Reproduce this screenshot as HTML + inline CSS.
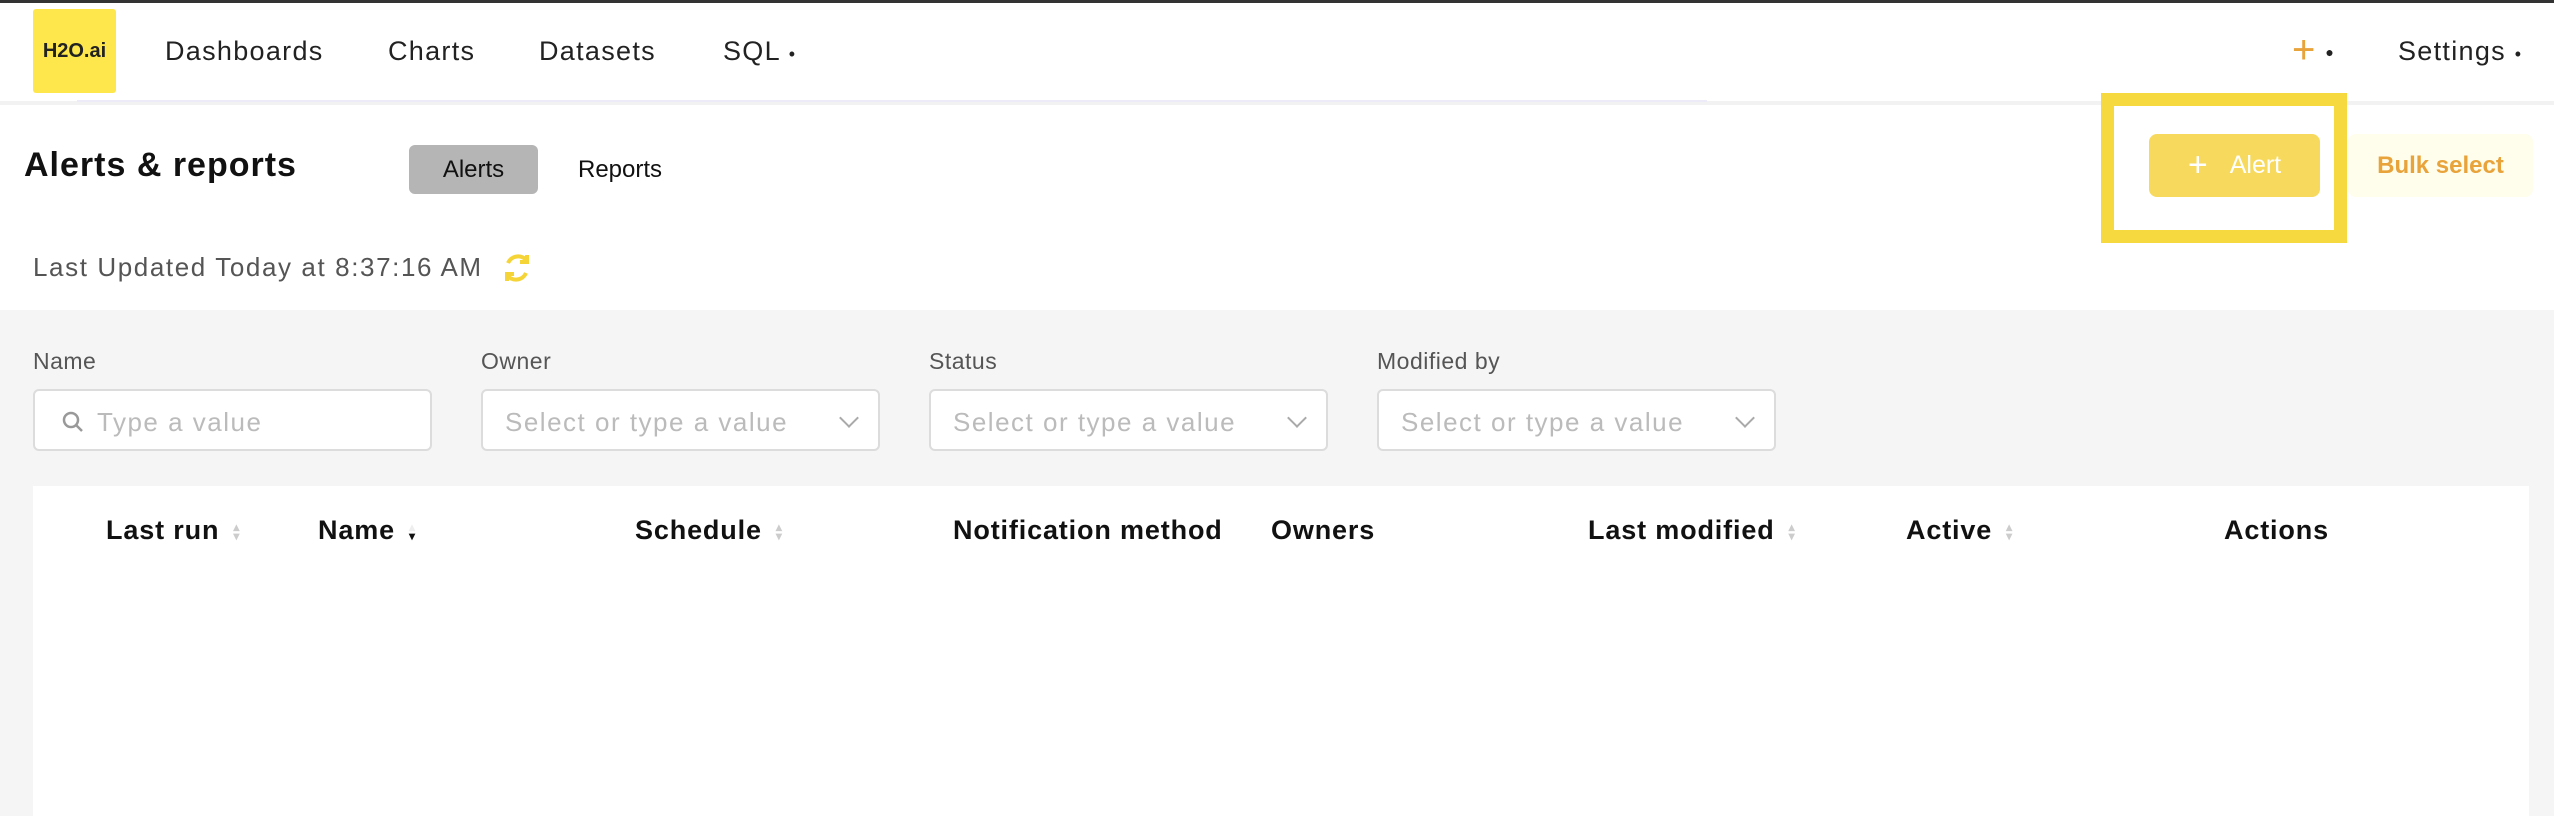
<!DOCTYPE html>
<html><head><style>
*{margin:0;padding:0;box-sizing:border-box}
body{width:2554px;height:816px;overflow:hidden;background:#fff;font-family:"Liberation Sans",sans-serif;position:relative;color:#111}
.a{position:absolute;white-space:nowrap}
.nav{font-size:27px;top:36px;color:#222;letter-spacing:1.3px}
.lbl{font-size:23px;color:#555;top:348px;letter-spacing:0.5px}
.inp{top:389px;height:62px;width:399px;background:#fff;border:2px solid #dcdcdc;border-radius:6px}
.ph{font-size:26px;color:#bbb;top:16px;left:22px;position:absolute;letter-spacing:1.5px}
.chev{position:absolute;right:22px;top:20px;width:14px;height:14px;border-right:2px solid #aaa;border-bottom:2px solid #aaa;transform:rotate(45deg)}
.th{font-size:27px;font-weight:bold;top:515px;color:#111;letter-spacing:0.85px}
.sort{display:inline-block;margin-left:14px;vertical-align:middle;font-size:12px;color:#ccc;line-height:9px}
</style></head><body>
<div class="a" style="left:0;top:0;width:2554px;height:3px;background:#333"></div>
<div class="a" style="left:33px;top:9px;width:83px;height:84px;background:#fde74c;border-radius:3px;font-size:20px;font-weight:bold;text-align:center;line-height:84px;color:#222">H2O.ai</div>
<div class="a nav" style="left:165px">Dashboards</div>
<div class="a nav" style="left:388px">Charts</div>
<div class="a nav" style="left:539px">Datasets</div>
<div class="a nav" style="left:723px">SQL <span style="font-size:18px">•</span></div>
<div class="a" style="left:2292px;top:28px;font-size:40px;color:#e8a33a">+<span style="font-size:14px;color:#222;vertical-align:middle;margin-left:10px">●</span></div>
<div class="a nav" style="left:2398px">Settings <span style="font-size:18px">•</span></div>
<div class="a" style="left:0;top:101px;width:2554px;height:4px;background:#f2f2f2"></div>
<div class="a" style="left:77px;top:100px;width:1630px;height:2px;background:#ecebf7"></div>
<div class="a" style="left:24px;top:146px;font-size:34px;font-weight:bold;letter-spacing:1px">Alerts &amp; reports</div>
<div class="a" style="left:409px;top:145px;width:129px;height:49px;background:#b5b5b5;border-radius:6px;font-size:24px;text-align:center;line-height:49px">Alerts</div>
<div class="a" style="left:578px;top:156px;font-size:24px">Reports</div>
<div class="a" style="left:33px;top:252px;font-size:26px;color:#555;letter-spacing:1.6px">Last Updated Today at 8:37:16 AM</div>
<svg class="a" style="left:500px;top:251px" width="34" height="34" viewBox="0 0 34 34" fill="none" stroke="#f5d437" stroke-width="4"><path d="M8 12 A11 11 0 0 1 27 10"/><path d="M26 22 A11 11 0 0 1 7 24"/><path d="M27 4v7h-7"/><path d="M7 30v-7h7"/></svg>
<div class="a" style="left:2101px;top:93px;width:246px;height:150px;border:13px solid #f5d93f"></div>
<div class="a" style="left:2149px;top:134px;width:171px;height:63px;background:#f6d95d;border-radius:8px;color:#fff;font-size:25px;text-align:center;line-height:63px"><span style="font-size:34px;vertical-align:-3px;margin-right:22px">+</span>Alert</div>
<div class="a" style="left:2348px;top:134px;width:185px;height:63px;background:#fffdeb;border-radius:8px;color:#e8a33a;font-size:24px;font-weight:bold;text-align:center;line-height:63px">Bulk select</div>
<div class="a" style="left:0;top:310px;width:2554px;height:506px;background:#f5f5f5"></div>
<div class="a lbl" style="left:33px">Name</div>
<div class="a lbl" style="left:481px">Owner</div>
<div class="a lbl" style="left:929px">Status</div>
<div class="a lbl" style="left:1377px">Modified by</div>
<div class="a inp" style="left:33px"><svg style="position:absolute;left:27px;top:20px" width="22" height="22" viewBox="0 0 22 22" fill="none" stroke="#999" stroke-width="2.5"><circle cx="9" cy="9" r="7"/><path d="M14 14l6 6"/></svg><span class="ph" style="left:62px">Type a value</span></div>
<div class="a inp" style="left:481px"><span class="ph">Select or type a value</span><i class="chev"></i></div>
<div class="a inp" style="left:929px"><span class="ph">Select or type a value</span><i class="chev"></i></div>
<div class="a inp" style="left:1377px"><span class="ph">Select or type a value</span><i class="chev"></i></div>
<div class="a" style="left:33px;top:486px;width:2496px;height:330px;background:#fff"></div>
<div class="a th" style="left:106px">Last run<span class="sort">▴<br>▾</span></div>
<div class="a th" style="left:318px">Name<span class="sort"><span style="color:#eee">▴</span><br><span style="color:#111">▾</span></span></div>
<div class="a th" style="left:635px">Schedule<span class="sort">▴<br>▾</span></div>
<div class="a th" style="left:953px">Notification method</div>
<div class="a th" style="left:1271px">Owners</div>
<div class="a th" style="left:1588px">Last modified<span class="sort">▴<br>▾</span></div>
<div class="a th" style="left:1906px">Active<span class="sort">▴<br>▾</span></div>
<div class="a th" style="left:2224px">Actions</div>
</body></html>
